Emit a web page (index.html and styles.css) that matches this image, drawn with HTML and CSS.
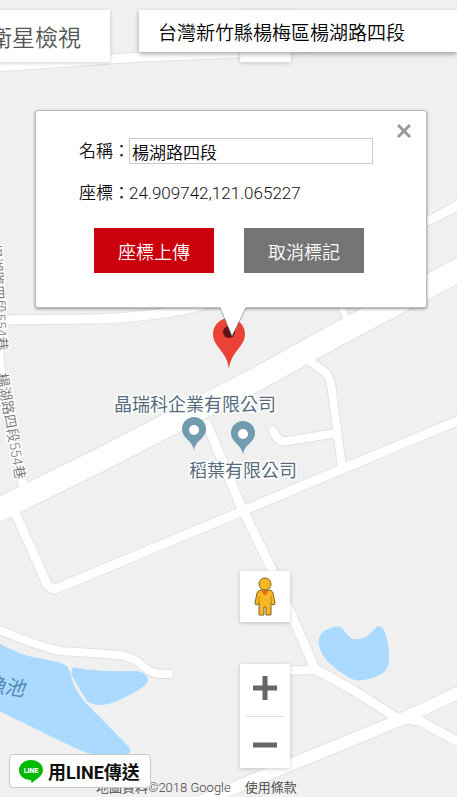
FILE: index.html
```html
<!DOCTYPE html>
<html lang="zh-Hant">

<head>
    <meta charset="UTF-8">
    <meta name="viewport" content="width=device-width, initial-scale=1">
    <title>座標上傳</title>
    <link rel="stylesheet" href="styles.css">
</head>

<body>
    <main class="map">
        <svg class="canvas" viewBox="0 0 457 797" preserveAspectRatio="xMinYMin slice">
            <defs>
                <g id="roads">
                    <path class="w9" d="M-5 67 L140 57 L240 53 L310 47" />
                    <path class="w9" d="M-5 320 L90 319 Q150 318 200 306 L230 296" />
                    <path class="w9" d="M-5 240 L-2 345 Q2 395 12 435 L24 490" />
                    <path class="w9" d="M410 226 Q430 221 440 215 L462 203" />
                    <path class="w6" d="M339 300 L347 320" />
                    <path class="w8" d="M303 356 L326 373 Q331 379 332 391 L342 468" />
                    <path class="w8" d="M273 430 Q277 443 288 441 L337 433" />
                    <path class="w9" d="M14 510 L44 577 Q49 592 58 588 L245 510 L342 469 L462 419" />
                    <path class="w9" d="M207 424 L240 504 L272 570 L315 669 L353 690 L397 718 L420 721 L462 744" />
                    <path class="w8" d="M265 671 L315 670" />
                    <path class="w12" d="M190 806 L290 765 L400 720 L462 691" />
                    <path class="w8" d="M-5 628 Q30 644 60 651 L107 654 Q133 655 144 667 Q152 675 169 674" />
                    <path class="w23" d="M-10 514 L100 460 L257 379 L340 333 L470 264" />
                </g>
                <g id="place">
                    <path d="M0 21 C-1 10 -12 9 -12 -1 A12 12 0 1 1 12 -1 C12 9 1 10 0 21 Z" />
                    <circle r="5" fill="#fff" />
                </g>
            </defs>

            <g class="water">
                <path d="M-5 641 Q12 651 28 656 L58 662 Q68 664 70 672 Q72 686 84 701 L128 746 Q134 753 126 755 Q100 760 75 748 L-5 709 Z" />
                <path d="M73 667 Q90 672 137 671 Q149 674 148 681 Q146 688 115 702 Q98 708 88 702 Q81 692 71 674 Z" />
                <path d="M319 638 Q321 630 334 627 Q341 625 345 632 Q351 641 359 639 Q368 638 374 629 Q379 623 384 630 Q389 642 389 655 Q390 670 380 675 Q364 682 355 680 Q345 677 328 662 Q317 649 319 638 Z" />
            </g>
            <use href="#roads" class="casing" />
            <use href="#roads" class="surface" />

            <text class="lane" transform="translate(-10 244) rotate(86)">楊湖路四段554巷</text>
            <text class="lane" transform="translate(-3 374) rotate(80)">楊湖路四段554巷</text>
            <text class="pond" transform="translate(-16 691) rotate(7)">漁池</text>

            <use href="#place" class="place" x="194" y="430" />
            <use href="#place" class="place" x="243" y="434" />
            <text class="company" x="114" y="411">晶瑞科企業有限公司</text>
            <text class="company" x="189" y="477">稻葉有限公司</text>

            <path fill="#ea4335" d="M229 369 C227 351 213 347 213 334 A16 16 0 1 1 245 334 C245 347 231 351 229 369 Z" />
            <circle cx="229" cy="332" r="6" fill="#5c1412" />
        </svg>

        <button class="control satellite" type="button">衛星檢視</button>
        <button class="control fullscreen" type="button" aria-label="全螢幕"></button>
        <input class="search" type="text" aria-label="地址" value="台灣新竹縣楊梅區楊湖路四段">

        <form class="info">
            <button class="close" type="button" aria-label="關閉">
                <svg width="14" height="14" viewBox="0 0 14 14">
                    <path d="M1 1 L13 13 M13 1 L1 13" stroke="#999" stroke-width="3" />
                </svg>
            </button>
            <div class="row">
                <label for="name">名稱：</label>
                <input id="name" class="name" type="text" value="楊湖路四段">
            </div>
            <div class="row">
                <span>座標：</span>
                <span class="coords">24.909742,121.065227</span>
            </div>
            <div class="actions">
                <button class="upload" type="button">座標上傳</button>
                <button class="cancel" type="button">取消標記</button>
            </div>
            <svg class="tail" width="28" height="30" viewBox="0 0 28 30">
                <path d="M1 0 L13 29 L27 0 Z" fill="#fff" />
                <path d="M1 1 L13 29 L27 1" fill="none" stroke="#777" stroke-opacity=".6" />
            </svg>
        </form>

        <div class="tools">
            <button class="control pegman" type="button" aria-label="街景服務">
                <svg width="22" height="40" viewBox="0 0 22 40">
                    <g fill="#fbb623" stroke="#7d6424" stroke-width="1">
                        <path d="M7 13 H15 Q18 13 19 16 L21 26 Q21 28 19 28 L17 26 V38 H12 V30 H10 V38 H5 V26 L3 28 Q1 28 1 26 L3 16 Q4 13 7 13 Z" />
                        <circle cx="11" cy="7" r="6" />
                    </g>
                    <path d="M7 14 H15 L11 19 Z" fill="#e2711d" />
                    <path d="M5 19 V26 M17 19 V26" stroke="#b98323" />
                </svg>
            </button>
            <div class="control zoom">
                <button type="button" aria-label="放大">
                    <svg width="24" height="24" viewBox="0 0 24 24">
                        <path d="M0 12 H24 M12 0 V24" stroke="#666" stroke-width="5" />
                    </svg>
                </button>
                <button type="button" aria-label="縮小">
                    <svg width="24" height="24" viewBox="0 0 24 24">
                        <path d="M0 12 H24" stroke="#666" stroke-width="5" />
                    </svg>
                </button>
            </div>
        </div>

        <footer class="credits">
            <span>地圖資料©2018 Google</span>
            <a href="#">使用條款</a>
        </footer>

        <button class="line" type="button">
            <svg width="24" height="24" viewBox="0 0 24 24">
                <path fill="#00b900" d="M12 1 C18 1 24 5 24 11 C24 16 19 19 14 23 Q12 25 12 21 C5 21 0 17 0 11 C0 5 6 1 12 1 Z" />
                <text class="logo" x="12" y="14" text-anchor="middle">LINE</text>
            </svg>
            <span>用LINE傳送</span>
        </button>
    </main>
</body>

</html>
```
FILE: styles.css
```css
* {
    box-sizing: border-box;
}

body {
    margin: 0;
    font-family: Roboto, "Noto Sans CJK TC", sans-serif;
}

button,
input {
    margin: 0;
    border: 0;
    border-radius: 0;
    font-family: inherit;
}

button {
    padding: 0;
    cursor: pointer;
}

svg {
    display: block;
}

.map {
    position: relative;
    min-height: 100vh;
    overflow: hidden;
    background: #f0f0f0;
}

.canvas {
    position: absolute;
    top: 0;
    left: 0;
    width: 100%;
    height: 100%;
}

/* roads are drawn twice: grey edge first, white on top */
#roads {
    fill: none;
    stroke-linecap: round;
    stroke-linejoin: round;
}

.casing {
    stroke: #e2e2e2;
    --edge: 2px;
}

.surface {
    stroke: #fff;
    --edge: 0px;
}

.w6 {
    stroke-width: calc(6px + var(--edge));
}

.w8 {
    stroke-width: calc(8px + var(--edge));
}

.w9 {
    stroke-width: calc(9px + var(--edge));
}

.w12 {
    stroke-width: calc(12px + var(--edge));
}

.w23 {
    stroke-width: calc(23px + var(--edge));
}

.water {
    fill: #aadaff;
}

.place {
    fill: #739bb0;
}

.company,
.lane {
    paint-order: stroke;
    stroke: #fff;
    stroke-width: 3px;
    stroke-linejoin: round;
}

.company {
    font-size: 18px;
    fill: #566c7d;
}

.lane {
    font-size: 14px;
    font-weight: 350;
    fill: #777;
}

.pond {
    font-size: 20px;
    font-style: italic;
    fill: #5184b5;
}

/* map controls */
.control {
    background: #fff;
    box-shadow: 0 1px 4px rgba(0, 0, 0, 0.2);
}

.satellite {
    position: absolute;
    top: 10px;
    left: -40px;
    height: 52px;
    padding: 0 29px;
    font-size: 23px;
    font-weight: 350;
    color: #555;
}

.fullscreen {
    position: absolute;
    top: 11px;
    left: 240px;
    width: 51px;
    height: 51px;
}

.search {
    position: absolute;
    top: 10px;
    left: 139px;
    width: calc(100% - 139px);
    height: 42px;
    padding: 0 19px;
    background: #fff;
    box-shadow: 0 2px 5px rgba(0, 0, 0, 0.35);
    font-size: 19px;
    font-weight: 350;
    color: #000;
}

.tools {
    position: absolute;
    left: 240px;
    bottom: 29px;
    display: flex;
    flex-direction: column;
    gap: 42px;
    width: 50px;
}

.pegman {
    display: flex;
    align-items: center;
    justify-content: center;
    height: 51px;
}

.zoom {
    display: flex;
    flex-direction: column;
    padding: 0 6px;
}

.zoom button {
    display: flex;
    align-items: center;
    justify-content: center;
    height: 52px;
    padding-bottom: 4px;
    background: none;
}

.zoom button + button {
    padding: 4px 0 0;
    border-top: 1px solid #e0e0e0;
}

/* info window */
.info {
    position: absolute;
    top: 110px;
    left: 35px;
    right: 30px;
    display: flex;
    flex-direction: column;
    gap: 16px;
    padding: 27px 43px 34px;
    border: 1px solid #bbb;
    border-radius: 3px;
    background: #fff;
    box-shadow: 0 1px 3px rgba(0, 0, 0, 0.4);
}

.close {
    position: absolute;
    top: 13px;
    right: 15px;
    background: none;
}

.row {
    display: grid;
    grid-template-columns: 50px auto;
    align-items: center;
    height: 26px;
    font-size: 17px;
    font-weight: 350;
    line-height: 24px;
    white-space: nowrap;
    color: #111;
}

.coords {
    font-weight: 300;
}

.name {
    width: 244px;
    height: 26px;
    padding: 0 2px;
    border: 1px solid #ccc;
    background: #fff;
    font-size: 17px;
    font-weight: 350;
    color: #000;
}

.actions {
    display: flex;
    gap: 30px;
    padding: 6px 0 0 15px;
}

.actions button {
    width: 120px;
    height: 45px;
    font-size: 18px;
    font-weight: 350;
    color: #fff;
}

.upload {
    background: #cc000c;
}

.cancel {
    background: #757575;
}

.tail {
    position: absolute;
    top: 100%;
    left: 183px;
}

/* bottom line */
.credits {
    position: absolute;
    left: 96px;
    bottom: 0;
    display: flex;
    gap: 14px;
    font-size: 13px;
    font-weight: 350;
    line-height: 18px;
    color: #444;
}

.credits a {
    color: #444;
    text-decoration: none;
}

.line {
    position: absolute;
    left: 9px;
    bottom: 9px;
    display: flex;
    align-items: center;
    gap: 5px;
    height: 34px;
    padding: 0 10px 0 9px;
    border: 1px solid #c8c8c8;
    border-radius: 4px;
    background: #fff;
    font-size: 18px;
    font-weight: 700;
    color: #111;
}

.logo {
    font-size: 7px;
    font-weight: 900;
    fill: #fff;
}
```
